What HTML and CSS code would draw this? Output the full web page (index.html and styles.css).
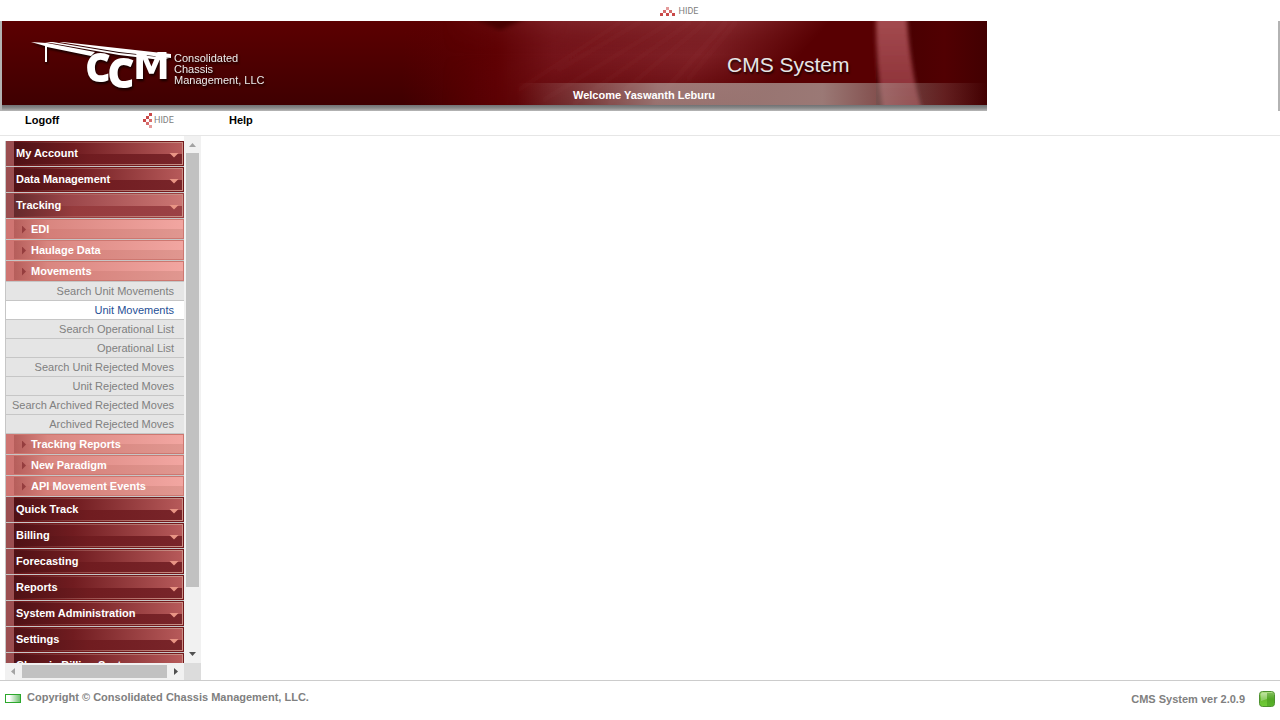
FILE: index.html
```html
<!DOCTYPE html>
<html lang="en">
<head>
<meta charset="utf-8">
<title>CMS System</title>
<link rel="stylesheet" href="styles.css">
</head>
<body>
<button class="hide-button hide-top" type="button">
  <svg width="15" height="9" viewBox="0 0 15 9" shape-rendering="crispEdges" aria-hidden="true"><path fill="#e49b9b" d="M6 0h3v3h-3z"/><path fill="#d66c6c" d="M3 3h3v3h-3zM9 3h3v3h-3z"/><path fill="#c94848" d="M0 6h3v3h-3zM6 6h3v3h-3zM12 6h3v3h-3z"/></svg>
  <span>HIDE</span>
</button>

<header class="header">
  <div class="banner">
    <svg class="banner-art" viewBox="0 0 985 84" preserveAspectRatio="none" aria-hidden="true">
      <defs>
        <linearGradient id="base" x1="0" y1="0" x2="0" y2="1"><stop offset="0" stop-color="#5c0001"/><stop offset="1" stop-color="#3f0001"/></linearGradient>
        <linearGradient id="glow" gradientUnits="userSpaceOnUse" x1="400" y1="0" x2="874" y2="0"><stop offset="0" stop-color="#5a0002" stop-opacity="0"/><stop offset=".2" stop-color="#5f0204"/><stop offset=".32" stop-color="#74141a"/><stop offset=".6" stop-color="#7e2026"/><stop offset="1" stop-color="#7e2529"/></linearGradient>
        <linearGradient id="shade" gradientUnits="userSpaceOnUse" x1="735" y1="-8" x2="791" y2="42"><stop offset="0" stop-color="#5c0002" stop-opacity="0"/><stop offset="1" stop-color="#580002"/></linearGradient>
        <linearGradient id="fade" x1="0" y1="0" x2="0" y2="1"><stop offset="0" stop-color="#8f383c" stop-opacity=".35"/><stop offset=".4" stop-color="#660508" stop-opacity="0"/><stop offset="1" stop-color="#520002" stop-opacity=".7"/></linearGradient>
        <linearGradient id="side" x1="0" x2="1"><stop offset="0" stop-color="#fff" stop-opacity="0"/><stop offset=".3" stop-color="#fff"/></linearGradient>
        <mask id="ease"><rect x="440" width="434" height="84" fill="url(#side)"/></mask>
        <linearGradient id="beam" x1="0" y1="0" x2="0" y2="1"><stop offset="0" stop-color="#a34a4f"/><stop offset="1" stop-color="#8a2e34"/></linearGradient>
        <linearGradient id="dark" x1="0" x2="1"><stop offset="0" stop-color="#480001"/><stop offset=".5" stop-color="#510002"/><stop offset="1" stop-color="#420001"/></linearGradient>
        <filter id="soft" x="-20%" width="140%"><feGaussianBlur stdDeviation="2 0"/></filter>
        <filter id="blur"><feGaussianBlur stdDeviation="2"/></filter>
      </defs>
      <rect width="985" height="84" fill="url(#base)"/>
      <rect x="400" width="474" height="84" fill="url(#glow)"/>
      <rect x="440" width="434" height="84" fill="url(#fade)" mask="url(#ease)"/>
      <g stroke="#b35358" stroke-opacity=".14" stroke-width="2" filter="url(#blur)"><path d="M515 70L620 0M540 80L670 0M570 84L690 0M605 84L705 0M650 84L725 0M685 60L735 0M555 50L640 0"/></g>
      <rect x="600" width="274" height="84" fill="url(#shade)"/>
      <path filter="url(#blur)" d="M470-3h55L498 9z" fill="#460001"/>
      <path d="M900 0h85v84h-64z" fill="url(#dark)"/>
      <path filter="url(#soft)" d="M874 0h31q4 52 14 84h-39q-6-42-6-84z" fill="url(#beam)"/>
    </svg>
    <svg class="logo" viewBox="0 0 245 60" role="img" aria-label="CCM Consolidated Chassis Management, LLC">
      <g fill="#fff">
        <path d="M1 6l16 1 48 9-4 4-44-9v15h-2V10zM15 6l8 0 66 11 50 5-8 2-42-5zM29 6l4 0 108 12v4L89 16z"/>
        <text class="logo-letter" x="56" y="45" font-size="37">C</text>
        <text class="logo-letter" x="78" y="51" font-size="40">C</text>
        <text class="logo-wide" x="103" y="43" font-size="37">M</text>
      </g>
      <g class="logo-name" fill="#ececec"><text x="144" y="26">Consolidated</text><text x="144" y="37">Chassis</text><text x="144" y="48">Management, LLC</text></g>
    </svg>
    <h1 class="title">CMS System</h1>
    <p class="welcome">Welcome Yaswanth Leburu</p>
  </div>
</header>

<nav class="toolbar">
  <a class="logoff" href="#">Logoff</a>
  <button class="hide-button hide-side" type="button">
    <svg width="9" height="15" viewBox="0 0 9 15" shape-rendering="crispEdges" aria-hidden="true"><path fill="#c94848" d="M6 0h3v3h-3zM3 3h3v3h-3zM0 6h3v3h-3z"/><path fill="#d66c6c" d="M6 6h3v3h-3zM3 9h3v3h-3z"/><path fill="#e49b9b" d="M6 12h3v3h-3z"/></svg>
    <span>HIDE</span>
  </button>
  <a href="#">Help</a>
</nav>

<main class="main">
  <aside class="sidebar">
    <nav class="menu">
      <a class="group" href="#">My Account</a>
      <a class="group" href="#">Data Management</a>
      <a class="group open" href="#">Tracking</a>
      <a class="sub" href="#">EDI</a>
      <a class="sub" href="#">Haulage Data</a>
      <a class="sub" href="#">Movements</a>
      <a class="leaf" href="#">Search Unit Movements</a>
      <a class="leaf current" href="#">Unit Movements</a>
      <a class="leaf" href="#">Search Operational List</a>
      <a class="leaf" href="#">Operational List</a>
      <a class="leaf" href="#">Search Unit Rejected Moves</a>
      <a class="leaf" href="#">Unit Rejected Moves</a>
      <a class="leaf" href="#">Search Archived Rejected Moves</a>
      <a class="leaf" href="#">Archived Rejected Moves</a>
      <a class="sub" href="#">Tracking Reports</a>
      <a class="sub" href="#">New Paradigm</a>
      <a class="sub" href="#">API Movement Events</a>
      <a class="group" href="#">Quick Track</a>
      <a class="group" href="#">Billing</a>
      <a class="group" href="#">Forecasting</a>
      <a class="group" href="#">Reports</a>
      <a class="group" href="#">System Administration</a>
      <a class="group" href="#">Settings</a>
      <a class="group" href="#">Chassis Billing System</a>
    </nav>
    <div class="bar bar-y" aria-hidden="true">
      <svg width="17" height="17"><path d="M5 11h7L8.500 7z" fill="#a3a3a3"/></svg>
      <div class="track"><div class="thumb"></div></div>
      <svg width="17" height="17"><path d="M5 6h7L8.500 10z" fill="#505050"/></svg>
    </div>
    <div class="bar bar-x" aria-hidden="true">
      <svg width="17" height="17"><path d="M10 5v7L6 8.500z" fill="#a3a3a3"/></svg>
      <div class="track"><div class="thumb"></div></div>
      <svg width="17" height="17"><path d="M7 5v7l4-3.500z" fill="#505050"/></svg>
    </div>
    <div class="corner"></div>
  </aside>
  <section class="content"></section>
</main>

<footer class="footer">
  <span class="progress"></span>
  <span class="copyright">Copyright © Consolidated Chassis Management, LLC.</span>
  <span class="version">CMS System ver 2.0.9</span>
  <svg class="status" width="16" height="16" viewBox="0 0 16 16" aria-hidden="true">
    <defs><linearGradient id="green" x1="0" y1="0" x2="0" y2="1"><stop offset="0" stop-color="#b5e08c"/><stop offset=".5" stop-color="#67bb30"/><stop offset="1" stop-color="#70ce38"/></linearGradient></defs>
    <rect x=".5" y=".5" width="15" height="15" rx="3" fill="url(#green)" stroke="#4e9130"/>
    <path d="M2 3q0-1 1-1h5v6l-6 2z" fill="#fff" fill-opacity=".28"/>
    <path d="M8 2h5q2 0 2 2v8q0 3-3 3H8z" fill="#287c10" fill-opacity=".32"/>
  </svg>
</footer>
</body>
</html>
```
FILE: styles.css
```css
* { box-sizing: border-box; }
body {
  margin: 0;
  height: 100vh;
  display: flex;
  flex-direction: column;
  background: #fff;
  font: 11px/13px "Liberation Sans", Arial, sans-serif;
}
a { color: inherit; text-decoration: none; }

.hide-button {
  display: flex;
  align-items: center;
  padding: 0;
  border: 0;
  background: none;
  color: #808080;
  font: 9px/11px Roboto, sans-serif;
}
.hide-top { align-self: center; gap: 4px; height: 21px; padding: 1px 0 0 78px; }
.hide-side { width: 86px; gap: 2px; }

.header {
  border: solid #b3b3b3;
  border-width: 0 2px;
  padding-bottom: 6px;
  background: linear-gradient(#6f7173, #8a8a8a 50%, #b8b8b8) left bottom / 985px 6px no-repeat;
}
.banner {
  position: relative;
  display: grid;
  grid-template-columns: 515px 1fr;
  grid-template-rows: 62px 22px;
  max-width: 985px;
}
.banner-art { position: absolute; inset: 0; width: 100%; height: 100%; }
.logo {
  position: relative;
  grid-row: 1 / 3;
  width: 245px;
  height: 60px;
  margin: 15px 0 0 28px;
  filter: drop-shadow(1px 2px 1px rgba(0, 0, 0, .7));
}
.logo-letter { font-family: "Open Sans", "Noto Sans", sans-serif; font-weight: bold; stroke: #fff; stroke-width: 2px; }
.logo-wide { font-family: "DejaVu Sans", sans-serif; font-weight: bold; }
.logo-name { font-size: 11px; }
.title {
  position: relative;
  align-self: end;
  margin: 0;
  padding: 0 0 6px 210px;
  color: #e6e6e6;
  font-size: 21px;
  line-height: 24px;
  font-weight: normal;
  text-shadow: 1px 2px 2px rgba(0, 0, 0, .7);
}
.welcome {
  position: relative;
  margin: 0;
  padding-left: 56px;
  color: #fff;
  font-weight: bold;
  line-height: 24px;
  background: linear-gradient(90deg, rgba(196, 190, 180, 0), rgba(186, 178, 172, .62) 30%, rgba(186, 178, 172, .68) 65%, rgba(170, 155, 150, .4) 82%, rgba(150, 120, 120, 0));
}

.toolbar {
  display: flex;
  align-items: center;
  height: 25px;
  padding: 0 25px 6px;
  border-bottom: 1px solid #e6e6e6;
  font-weight: bold;
  color: #000;
}
.logoff { width: 118px; }

.main { flex: 1; min-height: 0; display: flex; }
.content { flex: 1; }
.sidebar {
  display: grid;
  grid-template: minmax(0, 1fr) 17px / 179px 17px;
  margin-left: 5px;
}
.menu {
  display: flex;
  flex-direction: column;
  overflow: hidden;
  padding-top: 5px;
  font-weight: bold;
}
.menu a { flex: none; border-left: 1px solid #c6c6c6; border-bottom: 1px solid #c6c6c6; }

.group {
  --low: linear-gradient(90deg, #4f1115, #701c20 45%, #79252a);
  --high: linear-gradient(90deg, #4f1115, #701c20 35%, #b85b5b);
  --edge: #73191c;
  height: 26px;
  padding: 0 5px 0 10px;
  display: flex;
  align-items: center;
  color: #fff;
  background:
    linear-gradient(90deg, #9b4e50, #9b4e50) left / 8px 100% no-repeat,
    linear-gradient(var(--edge), var(--edge)) left top / 100% 1px no-repeat,
    linear-gradient(var(--edge), var(--edge)) right / 1px 100% no-repeat,
    linear-gradient(var(--edge), var(--edge)) left bottom / 100% 1px no-repeat,
    linear-gradient(90deg, rgba(202, 145, 135, 0) 5%, #ca9187) left 0 top 1px / calc(100% - 1px) 1px no-repeat,
    linear-gradient(90deg, rgba(202, 145, 135, 0) 5%, #ca9187) left 0 bottom 1px / calc(100% - 1px) 1px no-repeat,
    linear-gradient(#ca9187, #ca9187) right 1px center / 1px 22px no-repeat,
    var(--high) right 0 top 2px / calc(100% - 8px) 11px no-repeat,
    var(--low) right / calc(100% - 8px) 100% no-repeat;
}
.group::after {
  content: "";
  width: 10px;
  height: 5px;
  margin: 3px 0 0 auto;
  background: #e89484;
  clip-path: polygon(0 0, 100% 0, 50% 100%);
}
.open {
  --low: linear-gradient(90deg, #652a2c, #963b3d 35%, #9b4145);
  --high: linear-gradient(90deg, #652a2c, #994448 30%, #cc7774);
  --edge: #9b3e40;
}
.sub {
  height: 21px;
  padding-left: 16px;
  display: flex;
  align-items: center;
  gap: 5px;
  color: #fff;
  background:
    linear-gradient(90deg, #cf7572, #cf7572) left / 8px 100% no-repeat,
    linear-gradient(#cd7770, #cd7770) left top / 100% 1px no-repeat,
    linear-gradient(#cd7770, #cd7770) left bottom / 100% 1px no-repeat,
    linear-gradient(#cd7770, #cd7770) right / 1px 100% no-repeat,
    linear-gradient(90deg, #b65e5b, #d98680 20%, #f2a6a1) right 1px top 1px / calc(100% - 9px) 9px no-repeat,
    linear-gradient(90deg, #b65e5b, #d47e78 20%, #e09790) right 1px top 0 / calc(100% - 9px) 100% no-repeat;
}
.sub::before {
  content: "";
  width: 4px;
  height: 8px;
  margin-top: 1px;
  background: #953d3e;
  clip-path: polygon(0 0, 100% 50%, 0 100%);
}
.leaf {
  height: 19px;
  padding-right: 10px;
  color: #808080;
  background: #e5e5e5;
  font-weight: normal;
  line-height: 18px;
  text-align: right;
  white-space: nowrap;
}
.current { color: #1f4f96; background: #fff; }

.bar { display: flex; background: #f1f1f1; }
.bar svg { flex: none; }
.bar-y { flex-direction: column; }
.track { flex: 1; min-width: 0; min-height: 0; }
.thumb { background: #c1c1c1; }
.bar-y .track { padding: 0 2px; }
.bar-x .track { padding: 2px 0; }
.bar-y .thumb { height: 88%; }
.bar-x .thumb { height: 100%; }
.corner { background: #dcdcdc; }

.footer {
  display: flex;
  align-items: center;
  height: 40px;
  padding: 0 5px 4px;
  border-top: 1px solid #ccc;
  color: #808080;
  font-weight: bold;
}
.progress {
  width: 16px;
  height: 9px;
  margin-right: 6px;
  border: 1px solid #2ca82c;
  background: linear-gradient(90deg, #fff 25%, #73c173);
}
.copyright { padding-bottom: 2px; }
.version { margin: 1px 14px 0 auto; }
```
